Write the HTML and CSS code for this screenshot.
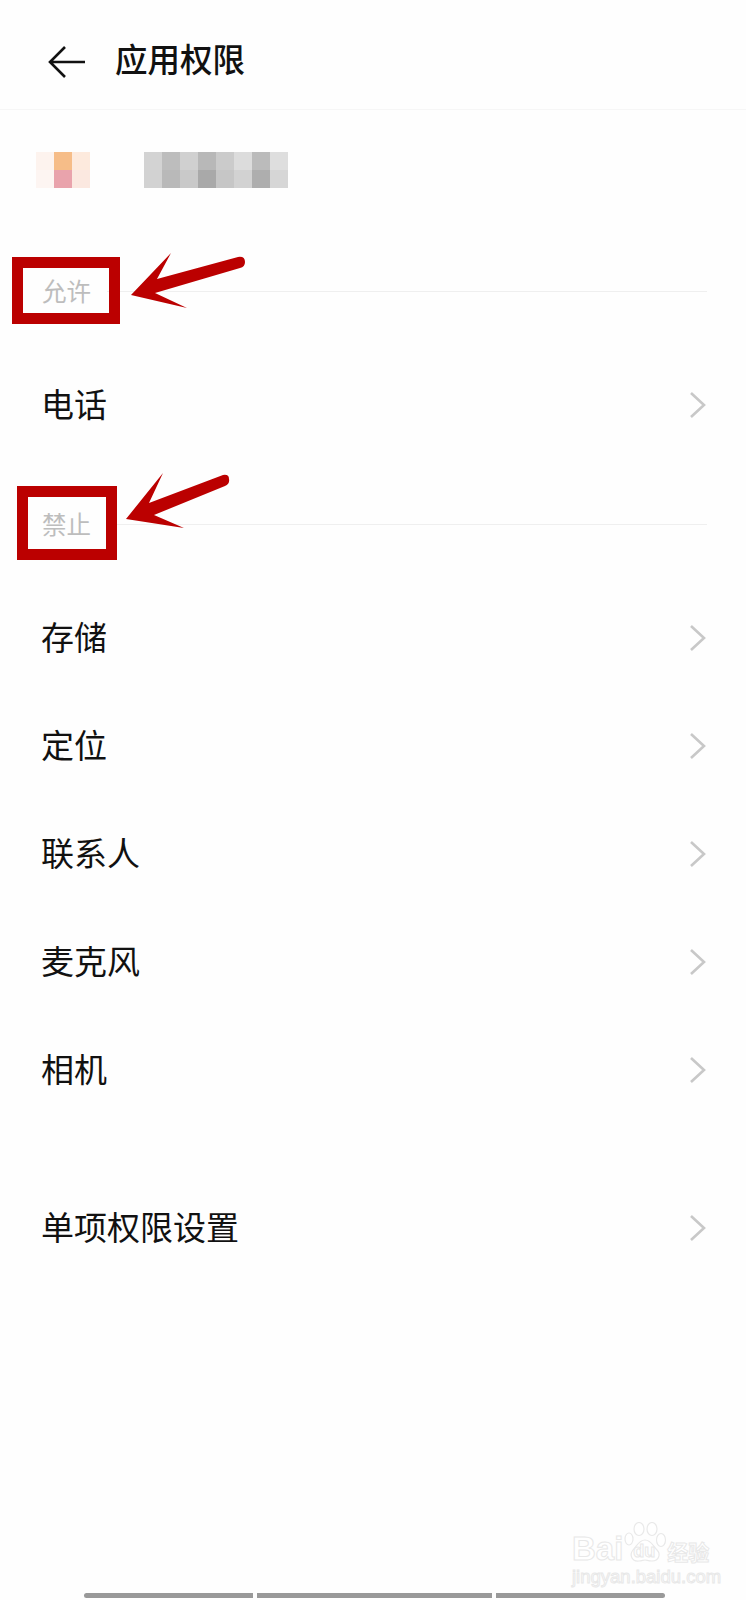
FILE: index.html
```html
<!DOCTYPE html>
<html lang="zh-CN">

<head>
    <meta charset="UTF-8">
    <meta name="viewport" content="width=device-width, initial-scale=1.0">
    <title>应用权限</title>
    <link rel="stylesheet" href="styles.css">
</head>

<body>
    <div class="page">
        <!-- Header -->
        <header class="top-bar">
            <svg class="back-icon" viewBox="0 0 38 32" width="38" height="32">
                <path d="M37 16H2M17 1L2 16l15 15" fill="none" stroke="#111" stroke-width="2.6" />
            </svg>
            <h1>应用权限</h1>
        </header>

        <!-- App (blurred in the screenshot) -->
        <div class="app-row">
            <div class="app-icon">
                <i class="c1"></i><i class="c2"></i><i class="c3"></i>
                <i class="c4"></i><i class="c5"></i><i class="c6"></i>
            </div>
            <div class="app-name">
                <i style="background:#d3d3d3"></i><i style="background:#bdbdbd"></i><i style="background:#d0d0d0"></i><i style="background:#b8b8b8"></i><i style="background:#cbcbcb"></i><i style="background:#dcdcdc"></i><i style="background:#bbb"></i><i style="background:#dedede"></i>
                <i style="background:#d2d2d2"></i><i style="background:#b9b9b9"></i><i style="background:#c9c9c9"></i><i style="background:#a9a9a9"></i><i style="background:#c6c6c6"></i><i style="background:#d2d2d2"></i><i style="background:#aeaeae"></i><i style="background:#d6d6d6"></i>
            </div>
        </div>

        <!-- Allowed -->
        <div class="section section-allow">
            <span class="section-label">允许</span>
            <span class="section-line"></span>
        </div>
        <ul class="list list-allow">
            <li class="row">电话<svg class="chevron" viewBox="0 0 18 28" width="18" height="28"><path d="M2 2l13 12L2 26" /></svg></li>
        </ul>

        <!-- Denied -->
        <div class="section section-deny">
            <span class="section-label">禁止</span>
            <span class="section-line"></span>
        </div>
        <ul class="list list-deny">
            <li class="row">存储<svg class="chevron" viewBox="0 0 18 28" width="18" height="28"><path d="M2 2l13 12L2 26" /></svg></li>
            <li class="row">定位<svg class="chevron" viewBox="0 0 18 28" width="18" height="28"><path d="M2 2l13 12L2 26" /></svg></li>
            <li class="row">联系人<svg class="chevron" viewBox="0 0 18 28" width="18" height="28"><path d="M2 2l13 12L2 26" /></svg></li>
            <li class="row">麦克风<svg class="chevron" viewBox="0 0 18 28" width="18" height="28"><path d="M2 2l13 12L2 26" /></svg></li>
            <li class="row">相机<svg class="chevron" viewBox="0 0 18 28" width="18" height="28"><path d="M2 2l13 12L2 26" /></svg></li>
        </ul>

        <ul class="list list-single">
            <li class="row">单项权限设置<svg class="chevron" viewBox="0 0 18 28" width="18" height="28"><path d="M2 2l13 12L2 26" /></svg></li>
        </ul>

        <!-- Red annotations drawn over the screenshot -->
        <svg class="marks" viewBox="0 0 746 1600" width="746" height="1600">
            <rect x="17.5" y="262.5" width="97" height="56" fill="none" stroke="#bb0000" stroke-width="11" />
            <rect x="22.5" y="491.5" width="89" height="63" fill="none" stroke="#bb0000" stroke-width="11" />
            <path d="M131 295L171 253L157 279L238 257Q245 256 245 262Q245 267 240 268L155 293L187 308Z" fill="#bb0000" />
            <path d="M126 519L163 473L149 503L223 475Q229 474 229 479Q230 484 225 486L154 515L184 528Z" fill="#bb0000" />
        </svg>

        <!-- Watermark -->
        <div class="watermark">
            <div class="wm-top">
                <span class="wm-bai">Bai</span>
                <span class="wm-paw">
                    <svg viewBox="0 0 44 44" width="44" height="44">
                        <g fill="#fff" stroke="#e9e9e9" stroke-width="1.2">
                            <ellipse cx="6" cy="17" rx="4" ry="6" />
                            <ellipse cx="16" cy="7" rx="5" ry="6.5" />
                            <ellipse cx="29" cy="7" rx="5" ry="6.5" />
                            <ellipse cx="38" cy="18" rx="4.5" ry="6.5" />
                            <path d="M22 18c-6 0-8 6-12 10-4 5-1 12 6 11 3 0 4-1 6-1s3 1 7 1c7 0 9-7 5-11-4-4-6-10-12-10z" />
                        </g>
                    </svg>
                    <span class="wm-du">du</span>
                </span>
                <span class="wm-cn">经验</span>
            </div>
            <div class="wm-url">jingyan.baidu.com</div>
        </div>

        <!-- Bottom scroll bars -->
        <div class="bars">
            <span class="bar bar-left"></span>
            <span class="bar bar-mid"></span>
            <span class="bar bar-right"></span>
        </div>
    </div>
</body>

</html>
```

FILE: styles.css
```css
* {
    box-sizing: border-box;
}

body {
    margin: 0;
    background-color: #fefefe;
    color: #111;
    font-family: "Noto Sans CJK SC", "Noto Sans", sans-serif;
}

.page {
    position: relative;
    width: 746px;
    height: 1600px;
    overflow: hidden;
}

/* Header */
.top-bar {
    display: flex;
    align-items: center;
    height: 110px;
    padding: 6px 0 0 48px;
    border-bottom: 1px solid #f6f6f6;
}

.back-icon {
    margin: 8px 29px 0 0;
}

h1 {
    margin: 0;
    font-size: 32.5px;
    font-weight: 500;
}

/* Blurred app */
.app-row {
    display: flex;
    padding: 42px 0 0 36px;
    height: 161px;
}

.app-icon {
    display: grid;
    grid-template-columns: repeat(3, 18px);
    grid-auto-rows: 18px;
    margin-right: 54px;
}

.c1 { background: #fdf3ee; }
.c2 { background: #f6bd88; }
.c3 { background: #fdeadd; }
.c4 { background: #fdf5f2; }
.c5 { background: #e9a3ac; }
.c6 { background: #fbe8e0; }

.app-name {
    display: grid;
    grid-template-columns: repeat(8, 18px);
    grid-auto-rows: 18px;
}

/* Section titles */
.section {
    display: flex;
    align-items: center;
    gap: 16px;
    height: 40px;
    padding: 0 39px 0 42px;
}

.section-label {
    color: #bdbdbd;
    font-size: 24.5px;
    line-height: 40px;
}

.section-line {
    flex: 1;
    height: 1px;
    background-color: #efefef;
}

.section-deny {
    margin-top: 45px;
}

/* Rows */
.list {
    margin: 0;
    padding: 0;
    list-style: none;
}

.list-allow {
    margin-top: 40px;
}

.list-deny {
    margin-top: 40px;
}

.list-single {
    margin-top: 50px;
}

.row {
    display: flex;
    align-items: center;
    justify-content: space-between;
    height: 108px;
    padding: 0 39px 4px 41px;
    font-size: 33px;
}

.chevron {
    margin-top: 4px;
}

.chevron path {
    fill: none;
    stroke: #c8c8c8;
    stroke-width: 2.6;
}

/* Annotations */
.marks {
    position: absolute;
    top: 0;
    left: 0;
}

/* Watermark */
.watermark {
    position: absolute;
    left: 572px;
    top: 1522px;
    width: 140px;
    color: #fff;
    -webkit-text-stroke: 1px #e8e8e8;
}

.wm-top {
    display: flex;
    align-items: flex-end;
    height: 44px;
}

.wm-bai {
    font-family: "Liberation Sans", sans-serif;
    font-size: 33px;
    font-weight: 700;
    line-height: 34px;
}

.wm-paw {
    position: relative;
    width: 44px;
    height: 44px;
}

.wm-du {
    position: absolute;
    left: 10px;
    bottom: 4px;
    font-family: "Liberation Sans", sans-serif;
    font-size: 18px;
    font-weight: 700;
}

.wm-cn {
    font-size: 21px;
    font-weight: 700;
    line-height: 30px;
    white-space: nowrap;
}

.wm-url {
    margin-top: 2px;
    font-family: "Liberation Sans", sans-serif;
    font-size: 18.5px;
    line-height: 18px;
    white-space: nowrap;
}

/* Bottom bars */
.bars {
    position: absolute;
    left: 84px;
    bottom: 2px;
    display: flex;
    gap: 4px;
}

.bar {
    height: 5px;
    background-color: #999;
}

.bar-left {
    width: 169px;
    border-radius: 3px 0 0 3px;
}

.bar-mid {
    width: 235px;
}

.bar-right {
    width: 169px;
    border-radius: 0 3px 3px 0;
}
```
